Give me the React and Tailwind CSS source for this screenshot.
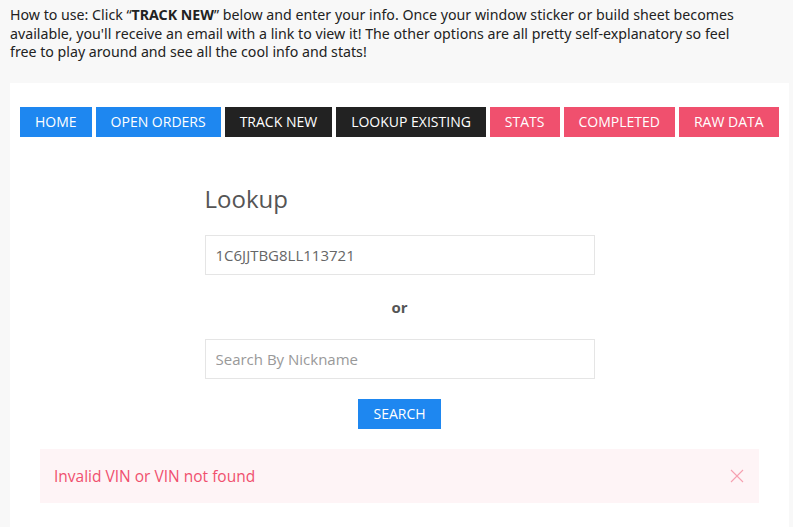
import { useState } from "react";

const navItems = [
  { label: "HOME", tone: "bg-[#1e87f0]" },
  { label: "OPEN ORDERS", tone: "bg-[#1e87f0]" },
  { label: "TRACK NEW", tone: "bg-[#222222]" },
  { label: "LOOKUP EXISTING", tone: "bg-[#222222]" },
  { label: "STATS", tone: "bg-[#f0506e]" },
  { label: "COMPLETED", tone: "bg-[#f0506e]" },
  { label: "RAW DATA", tone: "bg-[#f0506e]" },
];

const App = () => {
  const [vin, setVin] = useState("1C6JJTBG8LL113721");
  const [nickname, setNickname] = useState("");
  const [showError, setShowError] = useState(true);

  return (
    <div className="min-h-[527px] bg-[#f8f8f8] pl-[10px] pr-[4px] pt-[6px] font-['Open_Sans',sans-serif]">
      {/* INTRO */}
      <p className="text-[14.2px] leading-[18.5px] text-[#222] whitespace-nowrap font-['Noto_Sans',sans-serif]">
        How to use: Click “<b>TRACK NEW</b>” below and enter your info. Once your window sticker or build sheet becomes
        <br />
        available, you'll receive an email with a link to view it! The other options are all pretty self-explanatory so feel
        <br />
        free to play around and see all the cool info and stats!
      </p>

      {/* CARD */}
      <div className="mt-[21px] bg-white px-[10px] pt-[24px] pb-[24px] min-h-[444px]">
        {/* NAV */}
        <div className="flex gap-[4px]">
          {navItems.map((item) => (
            <button
              key={item.label}
              className={`${item.tone} h-[30px] px-[15px] text-[14px] leading-[30px] text-white`}
            >
              {item.label}
            </button>
          ))}
        </div>

        {/* LOOKUP FORM */}
        <div className="mx-auto mt-[45px] w-[390px]">
          <h3 className="text-[24px] leading-[34px] text-[#555]">Lookup</h3>
          <input
            value={vin}
            onChange={(e) => setVin(e.target.value)}
            className="mt-[19px] block h-[40px] w-full border border-[#e5e5e5] px-[10px] text-[15px] text-[#666] outline-none"
          />
          <p className="mt-[20px] text-center text-[15px] leading-[24px] font-bold text-[#555]">or</p>
          <input
            value={nickname}
            onChange={(e) => setNickname(e.target.value)}
            placeholder="Search By Nickname"
            className="mt-[20px] block h-[40px] w-full border border-[#e5e5e5] px-[10px] text-[15px] text-[#666] placeholder:text-[#999] outline-none"
          />
          <div className="mt-[20px] flex justify-center">
            <button className="h-[30px] bg-[#1e87f0] px-[15px] text-[14px] leading-[30px] text-white">
              SEARCH
            </button>
          </div>
        </div>

        {/* ALERT */}
        {showError && (
          <div className="mx-[20px] mt-[20px] flex items-center justify-between bg-[#fef4f6] py-[15px] pl-[14px] pr-[15px]">
            <span className="text-[15.5px] leading-[24px] text-[#f0506e]">Invalid VIN or VIN not found</span>
            <button onClick={() => setShowError(false)} className="text-[#f0506e] opacity-50">
              <svg width="14" height="14" viewBox="0 0 14 14" fill="none" stroke="currentColor" strokeWidth="1.1">
                <line x1="1" y1="1" x2="13" y2="13" />
                <line x1="13" y1="1" x2="1" y2="13" />
              </svg>
            </button>
          </div>
        )}
      </div>
    </div>
  );
};

export default App;
